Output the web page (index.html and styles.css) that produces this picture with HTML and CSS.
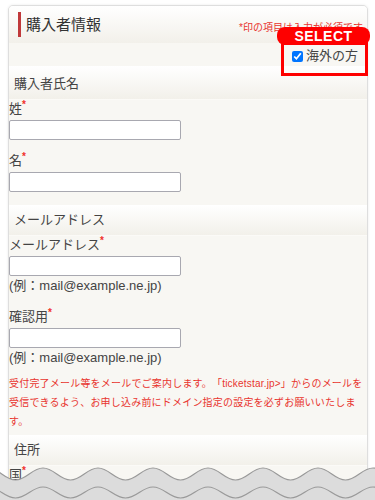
FILE: index.html
```html
<!DOCTYPE html>
<html lang="ja">
<head>
    <meta charset="UTF-8">
    <meta name="viewport" content="width=device-width, initial-scale=1.0">
    <title>購入者情報</title>
    <link rel="stylesheet" href="styles.css">
</head>
<body>
    <div class="page">
        <div class="card">
            <div class="card-head">
                <h2 class="card-title">購入者情報</h2>
                <span class="required-note">*印の項目は入力が必須です</span>
            </div>

            <div class="overseas-row">
                <label class="overseas"><input type="checkbox" checked> 海外の方</label>
            </div>

            <div class="section-head first">購入者氏名</div>
            <div class="fields">
                <div class="field">
                    <label for="sei">姓<span class="req">*</span></label>
                    <input type="text" id="sei">
                </div>
                <div class="field">
                    <label for="mei">名<span class="req">*</span></label>
                    <input type="text" id="mei">
                </div>
            </div>

            <div class="section-head">メールアドレス</div>
            <div class="fields with-note">
                <div class="field">
                    <label for="mail">メールアドレス<span class="req">*</span></label>
                    <input type="text" id="mail">
                    <div class="example">(例：mail@example.ne.jp)</div>
                </div>
                <div class="field">
                    <label for="mail2">確認用<span class="req">*</span></label>
                    <input type="text" id="mail2">
                    <div class="example">(例：mail@example.ne.jp)</div>
                </div>
                <p class="mail-note">受付完了メール等をメールでご案内します。「ticketstar.jp&gt;」からのメールを受信できるよう、お申し込み前にドメイン指定の設定を必ずお願いいたします。</p>
            </div>

            <div class="section-head">住所</div>
            <div class="fields">
                <div class="field">
                    <label for="kuni">国<span class="req">*</span></label>
                </div>
            </div>
        </div>

        <!-- 注目枠 -->
        <div class="select-tag">SELECT</div>
        <div class="select-box"></div>

        <!-- 切り取り線 -->
        <svg class="torn" width="375" height="40" viewBox="0 0 375 40">
            <path d="M-39.5,20 c11,0 16.5,-12 27.5,-12 s16.5,12 27.5,12 s16.5,-12 27.5,-12 s16.5,12 27.5,12 s16.5,-12 27.5,-12 s16.5,12 27.5,12 s16.5,-12 27.5,-12 s16.5,12 27.5,12 s16.5,-12 27.5,-12 s16.5,12 27.5,12 s16.5,-12 27.5,-12 s16.5,12 27.5,12 s16.5,-12 27.5,-12 s16.5,12 27.5,12 s16.5,-12 27.5,-12 s16.5,12 27.5,12 s16.5,-12 27.5,-12 L400,40 L-40,40 Z" fill="#dcdcdc"/>
            <path d="M-39.5,20 c11,0 16.5,-12 27.5,-12 s16.5,12 27.5,12 s16.5,-12 27.5,-12 s16.5,12 27.5,12 s16.5,-12 27.5,-12 s16.5,12 27.5,12 s16.5,-12 27.5,-12 s16.5,12 27.5,12 s16.5,-12 27.5,-12 s16.5,12 27.5,12 s16.5,-12 27.5,-12 s16.5,12 27.5,12 s16.5,-12 27.5,-12 s16.5,12 27.5,12 s16.5,-12 27.5,-12 s16.5,12 27.5,12 s16.5,-12 27.5,-12" fill="none" stroke="#999" stroke-width="1.2"/>
            <path d="M-39.5,38 c11,0 16.5,-11 27.5,-11 s16.5,11 27.5,11 s16.5,-11 27.5,-11 s16.5,11 27.5,11 s16.5,-11 27.5,-11 s16.5,11 27.5,11 s16.5,-11 27.5,-11 s16.5,11 27.5,11 s16.5,-11 27.5,-11 s16.5,11 27.5,11 s16.5,-11 27.5,-11 s16.5,11 27.5,11 s16.5,-11 27.5,-11 s16.5,11 27.5,11 s16.5,-11 27.5,-11 s16.5,11 27.5,11 s16.5,-11 27.5,-11" fill="none" stroke="#999" stroke-width="1.2"/>
        </svg>
    </div>
</body>
</html>
```

FILE: styles.css
```css
body {
    margin: 0;
    background-color: #fff;
    font-family: "Liberation Sans", "Noto Sans CJK JP", sans-serif;
    color: #444;
    text-spacing-trim: space-all;
}
.page {
    position: relative;
    height: 500px;
    overflow: hidden;
    padding-top: 5px;
    box-sizing: border-box;
}
.card {
    margin: 0 7px 0 8px;
    border: 1px solid #dedede;
    border-radius: 5px;
    background-color: #f8f7f3;
    box-shadow: 0 0 3px rgba(0, 0, 0, 0.08);
    overflow: hidden;
}
.card-head {
    display: flex;
    align-items: center;
    justify-content: space-between;
    height: 37px;
    padding: 0 0 0 9px;
    background: linear-gradient(#fff, #f2f0ea);
}
.card-title {
    margin: 0;
    padding-left: 5px;
    border-left: 3px solid #c0393b;
    font-size: 15px;
    font-weight: normal;
    line-height: 25px;
    color: #333;
}
.required-note {
    font-size: 10px;
    color: #e8342e;
    white-space: nowrap;
    margin-right: 4px;
    padding-top: 3px;
}
.overseas-row {
    display: flex;
    justify-content: flex-end;
    align-items: flex-end;
    height: 23px;
    padding-right: 9px;
    box-sizing: border-box;
    padding-bottom: 1px;
}
.overseas {
    display: flex;
    align-items: center;
    font-size: 13px;
    color: #444;
    line-height: 18px;
}
.overseas input {
    width: 11px;
    height: 11px;
    margin: 0 3px 0 0;
}
.section-head {
    padding: 6px 5px;
    font-size: 13px;
    line-height: 18px;
    background: linear-gradient(#fff, #f2f0ea);
    border-bottom: 1px solid #fbfaf7;
}
.section-head.first {
    padding-top: 9px;
}
.fields {
    padding-bottom: 13px;
}
.fields.with-note {
    padding-bottom: 4px;
}
.field {
    margin-top: 12px;
}
.field:first-child {
    margin-top: 0;
}
.field label {
    display: block;
    font-size: 13px;
    line-height: 18px;
    color: #444;
}
.req {
    color: #f0302a;
    font-size: 10px;
    font-weight: bold;
    vertical-align: top;
    line-height: 10px;
}
.field input {
    display: block;
    width: 172px;
    height: 20px;
    margin: 2px 0 0 0;
    box-sizing: border-box;
    border: 1px solid #a8a8b0;
    border-radius: 2px;
    background-color: #fff;
}
.example {
    font-size: 13px;
    line-height: 20px;
    color: #444;
}
.mail-note {
    margin: 6px 0 0 0;
    font-size: 10px;
    line-height: 19px;
    letter-spacing: 0.2px;
    color: #e8342e;
}
.fields:last-child {
    padding-bottom: 40px;
}
.select-tag {
    position: absolute;
    left: 277px;
    top: 27px;
    width: 93px;
    height: 18px;
    border-radius: 8px;
    background-color: #fe0000;
    color: #fff;
    font-family: "Liberation Sans", Arial, sans-serif;
    font-weight: bold;
    font-size: 14px;
    letter-spacing: 0.5px;
    line-height: 18px;
    text-align: center;
    z-index: 2;
}
.select-box {
    position: absolute;
    left: 281px;
    top: 42px;
    width: 87px;
    height: 34px;
    box-sizing: border-box;
    border: 3px solid #fe0000;
    z-index: 1;
}
.torn {
    position: absolute;
    left: 0;
    bottom: 0;
    display: block;
}
```
